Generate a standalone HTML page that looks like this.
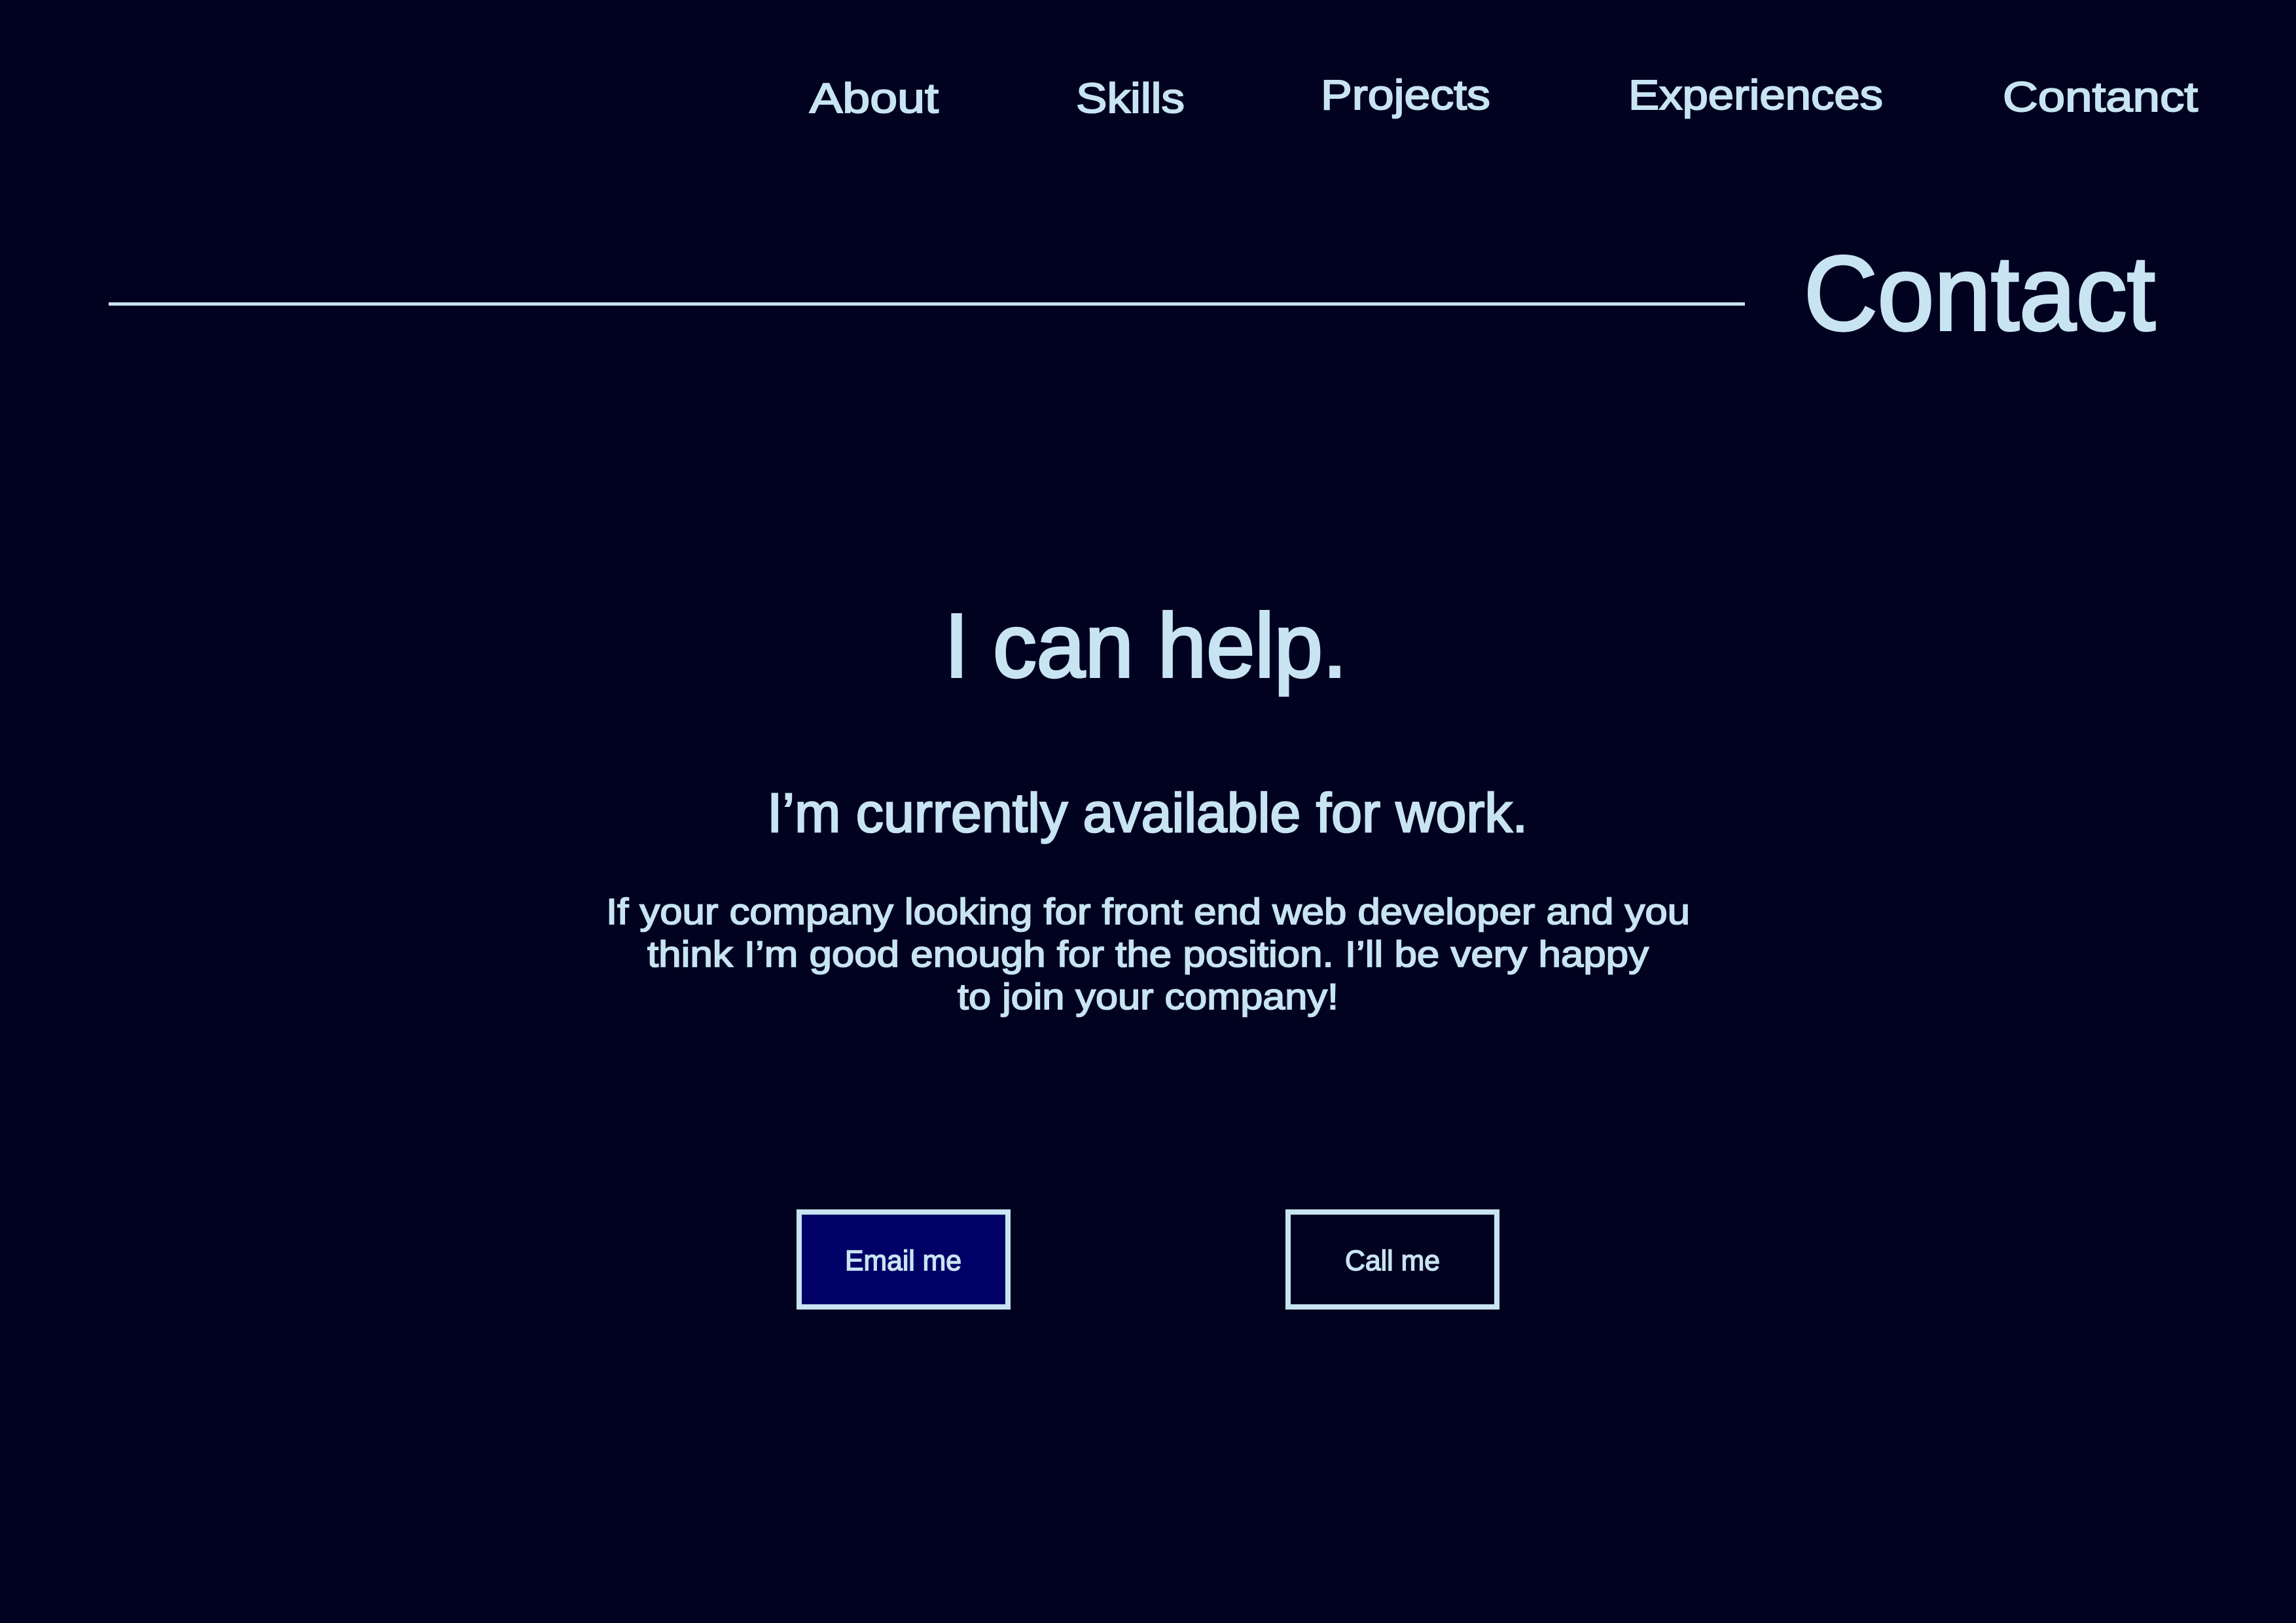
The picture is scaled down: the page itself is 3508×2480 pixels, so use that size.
<!DOCTYPE html>
<html><head><meta charset="utf-8"><style>
html,body{margin:0;padding:0;background:#000220;}
svg{display:block;}
text{font-family:"Liberation Sans","DejaVu Sans",sans-serif;fill:#c8e4f2;stroke:#c8e4f2;}
</style></head><body>
<svg width="3508" height="2480" viewBox="0 0 3508 2480" xmlns="http://www.w3.org/2000/svg">
<rect width="3508" height="2480" fill="#000220"/>
<g font-size="64" stroke-width="2">
<text x="1237" y="172" textLength="197" lengthAdjust="spacingAndGlyphs">About</text>
<text x="1644" y="172" textLength="166" lengthAdjust="spacingAndGlyphs">Skills</text>
<text x="2018" y="167" textLength="259" lengthAdjust="spacingAndGlyphs">Projects</text>
<text x="2488" y="167" textLength="389" lengthAdjust="spacingAndGlyphs">Experiences</text>
<text x="3060" y="170" textLength="298" lengthAdjust="spacingAndGlyphs">Contanct</text>
</g>
<rect x="166" y="462" width="2500" height="5" fill="#c8e4f2"/>
<text x="2756" y="504" font-size="162" stroke-width="4" textLength="537" lengthAdjust="spacingAndGlyphs">Contact</text>
<text x="1443" y="1034" font-size="138" stroke-width="4" textLength="615" lengthAdjust="spacingAndGlyphs">I can help.</text>
<text x="1172" y="1271" font-size="84" stroke-width="2.5" textLength="1162" lengthAdjust="spacingAndGlyphs">I’m currently available for work.</text>
<g font-size="56" stroke-width="1.8">
<text x="926" y="1412" textLength="1656" lengthAdjust="spacingAndGlyphs">If your company looking for front end web developer and you</text>
<text x="989" y="1477" textLength="1530" lengthAdjust="spacingAndGlyphs">think I’m good enough for the position. I’ll be very happy</text>
<text x="1463" y="1542" textLength="582" lengthAdjust="spacingAndGlyphs">to join your company!</text>
</g>
<rect x="1221" y="1852" width="319" height="145" fill="#000066" stroke="#c8e4f2" stroke-width="8"/>
<rect x="1968" y="1852" width="319" height="145" fill="#000220" stroke="#c8e4f2" stroke-width="8"/>
<g font-size="44" stroke-width="1.5">
<text x="1291" y="1941" textLength="178" lengthAdjust="spacingAndGlyphs">Email me</text>
<text x="2055" y="1941" textLength="145" lengthAdjust="spacingAndGlyphs">Call me</text>
</g>
</svg>
</body></html>
